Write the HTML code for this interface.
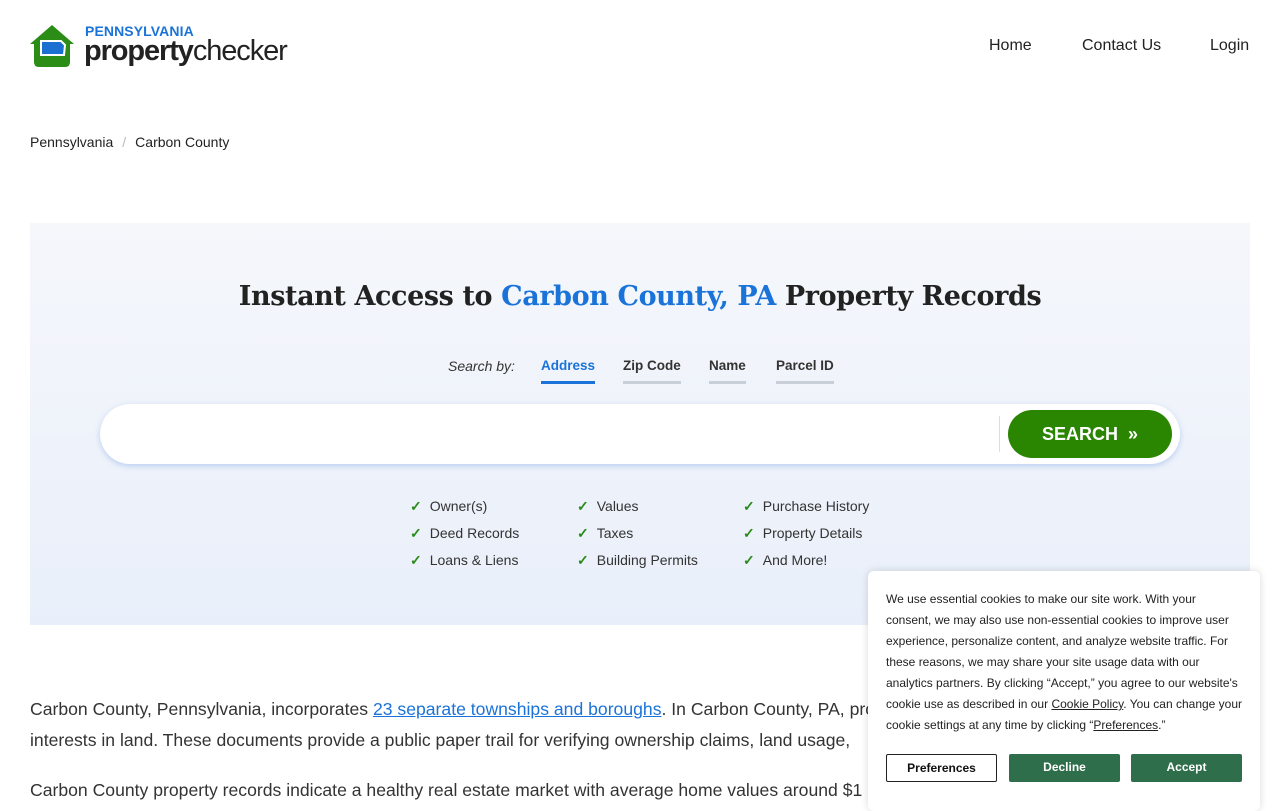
<!DOCTYPE html>
<html><head><meta charset="utf-8"><style>
*{box-sizing:border-box;margin:0;padding:0}
body{width:1280px;height:800px;overflow:hidden;background:#fff;font-family:"Liberation Sans",Arial,sans-serif;color:#222;position:relative}
.nav{position:absolute;top:37px;font-size:16px;color:#222}
.bc{position:absolute;top:134px;left:30px;font-size:14px;color:#222}
.bc span{color:#bbb;margin:0 9px}
.hero{position:absolute;left:30px;top:223px;width:1220px;height:402px;background:linear-gradient(#f5f7fb,#e9effa)}
h1{position:absolute;top:281px;left:0;width:1280px;text-align:center;font-family:"DejaVu Serif","Liberation Serif",serif;font-size:27px;font-weight:600;color:#222;letter-spacing:-0.4px}
h1 b{color:#1a73d9;font-weight:600}
.tab{position:absolute;top:358px;font-size:13.5px;font-weight:bold;color:#333;padding-bottom:8px;border-bottom:3px solid #c9cfd8}
.sb{position:absolute;left:100px;top:404px;width:1080px;height:60px;background:#fff;border-radius:30px;box-shadow:0 2px 6px rgba(90,140,220,.35)}
.sep{position:absolute;left:999px;top:416px;width:1px;height:36px;background:#ddd}
.btn{position:absolute;left:1008px;top:410px;width:164px;height:48px;border-radius:24px;background:#2a8500;color:#fff;font-weight:bold;font-size:18px;line-height:48px;text-align:center}
.f{position:absolute;font-size:14px;color:#333}
.f i{font-style:normal;color:#2a8a1a;font-weight:bold;margin-right:8px}
.p{position:absolute;left:30px;font-size:17.6px;color:#333;white-space:nowrap}
.p a{color:#1a73d9;text-decoration:underline}
.ck{position:absolute;left:868px;top:571px;width:392px;height:240px;background:#fff;border-radius:6px;box-shadow:0 0 8px rgba(0,0,0,.15);padding:18px 18px}
.ck p{font-size:12px;line-height:21px;color:#222}
.ck u{text-decoration:underline}
.cb{position:absolute;top:183px;width:111px;height:28px;font-size:12px;font-weight:bold;text-align:center;line-height:27px;border-radius:2px}
</style></head><body>
<svg style="position:absolute;left:30px;top:24px" width="44" height="44" viewBox="0 0 44 44"><path d="M22 1 L44 20 L40 20 L40 38 Q40 43 35 43 L9 43 Q4 43 4 38 L4 20 L0 20 Z" fill="#2b8c16"/><path d="M11 17 L31 17 L33 19 L35 21 L34 31 L11 31 Z" fill="#1a6fd1" stroke="#fff" stroke-width="2"/></svg>
<div style="position:absolute;left:85px;top:23px;font-size:14px;font-weight:bold;color:#1a73d9;letter-spacing:0.1px">PENNSYLVANIA</div>
<div style="position:absolute;left:84px;top:35px;font-size:29px;color:#222;letter-spacing:-1.1px"><b>property</b>checker</div>
<div class="nav" style="left:989px">Home</div>
<div class="nav" style="left:1082px">Contact Us</div>
<div class="nav" style="left:1210px">Login</div>
<div class="bc">Pennsylvania<span>/</span>Carbon County</div>
<div class="hero"></div>
<h1>Instant Access to <b>Carbon County, PA</b> Property Records</h1>
<div style="position:absolute;top:358px;left:448px;font-size:14px;font-style:italic;color:#333">Search by:</div>
<div class="tab" style="left:541px;color:#1a73d9;border-color:#1a73d9">Address</div>
<div class="tab" style="left:623px">Zip Code</div>
<div class="tab" style="left:709px">Name</div>
<div class="tab" style="left:776px">Parcel ID</div>
<div class="sb"></div><div class="sep"></div>
<div class="btn">SEARCH &nbsp;»</div>
<div class="f" style="left:410px;top:498px"><i>✓</i>Owner(s)</div>
<div class="f" style="left:410px;top:525px"><i>✓</i>Deed Records</div>
<div class="f" style="left:410px;top:552px"><i>✓</i>Loans &amp; Liens</div>
<div class="f" style="left:577px;top:498px"><i>✓</i>Values</div>
<div class="f" style="left:577px;top:525px"><i>✓</i>Taxes</div>
<div class="f" style="left:577px;top:552px"><i>✓</i>Building Permits</div>
<div class="f" style="left:743px;top:498px"><i>✓</i>Purchase History</div>
<div class="f" style="left:743px;top:525px"><i>✓</i>Property Details</div>
<div class="f" style="left:743px;top:552px"><i>✓</i>And More!</div>
<div class="p" style="top:699px">Carbon County, Pennsylvania, incorporates <a>23 separate townships and boroughs</a>. In Carbon County, PA, property records</div>
<div class="p" style="top:730px">interests in land. These documents provide a public paper trail for verifying ownership claims, land usage,</div>
<div class="p" style="top:780px">Carbon County property records indicate a healthy real estate market with average home values around $1</div>
<div class="ck"><p>We use essential cookies to make our site work. With your consent, we may also use non-essential cookies to improve user experience, personalize content, and analyze website traffic. For these reasons, we may share your site usage data with our analytics partners. By clicking “Accept,” you agree to our website's cookie use as described in our <u>Cookie Policy</u>. You can change your cookie settings at any time by clicking “<u>Preferences</u>.”</p>
<div class="cb" style="left:18px;border:1px solid #222;color:#111">Preferences</div>
<div class="cb" style="left:141px;background:#2f6e4a;color:#fff">Decline</div>
<div class="cb" style="left:263px;background:#2f6e4a;color:#fff">Accept</div>
</div>
</body></html>
